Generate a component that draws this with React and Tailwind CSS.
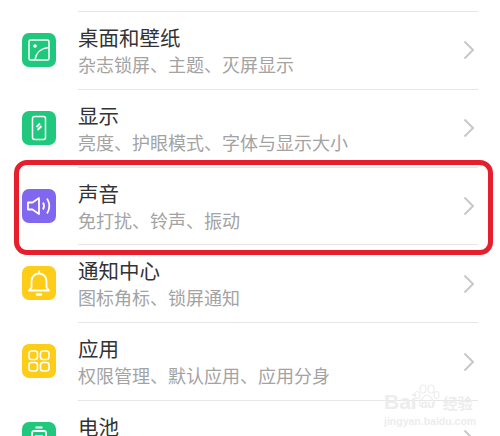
const font = { fontFamily: '"Noto Sans CJK SC", "Liberation Sans", sans-serif' };

const items = [
  { title: "桌面和壁纸", sub: "杂志锁屏、主题、灭屏显示", bg: "bg-[#1fc87c]", icon: <WallpaperIcon /> },
  { title: "显示", sub: "亮度、护眼模式、字体与显示大小", bg: "bg-[#1fc87c]", icon: <DisplayIcon /> },
  { title: "声音", sub: "免打扰、铃声、振动", bg: "bg-[#8166f0]", icon: <SoundIcon /> },
  { title: "通知中心", sub: "图标角标、锁屏通知", bg: "bg-[#fdcd17]", icon: <BellIcon /> },
  { title: "应用", sub: "权限管理、默认应用、应用分身", bg: "bg-[#fdcd17]", icon: <AppsIcon /> },
  { title: "电池", sub: "", bg: "bg-[#1fc87c]", icon: <BatteryIcon /> },
];

export default function App() {
  return (
    <div style={font} className="relative h-[436px] w-[500px] overflow-hidden bg-white pt-[11px]">
      {items.map((item) => (
        <Row key={item.title} {...item} />
      ))}

      {/* red highlight drawn on top of the screenshot */}
      <div className="absolute left-[14px] top-[160px] h-[95px] w-[479px] rounded-[13px] border-[5px] border-[#e61f2d]" />

      {/* watermark */}
      <Watermark />
    </div>
  );
}

function Row({ title, sub, bg, icon }) {
  return (
    <div className="flex h-[77.8px] pl-[22px] pr-[22px]">
      <div className={`mt-[22px] flex h-[34px] w-[34px] shrink-0 items-center justify-center rounded-[7px] ${bg}`}>
        {icon}
      </div>
      <div className="ml-[22px] flex flex-1 items-center border-t border-[#e6e6e6]">
        <div className="flex-1 self-start pt-[11px]">
          <div className="text-[20.5px] leading-[29px] text-[#333333]">{title}</div>
          <div className="text-[18px] leading-[24px] text-[#a3a3a3]">{sub}</div>
        </div>
        <svg width="12" height="20" viewBox="0 0 12 20" fill="none" stroke="#c8c8c8" strokeWidth="2" className="mr-[3px]">
          <path d="M1.5 1.5 10 10l-8.500 8.500" />
        </svg>
      </div>
    </div>
  );
}

function Watermark() {
  return (
    <div className="absolute left-[384px] top-[384px] w-[92px] font-['Liberation_Sans',sans-serif] text-[#ededed]">
      <svg width="26" height="26" viewBox="0 0 26 26" fill="none" stroke="#ededed" strokeWidth="1.200" className="absolute left-[30px] top-0">
        <ellipse cx="9" cy="5" rx="3" ry="4" />
        <ellipse cx="17" cy="5" rx="3" ry="4" />
        <ellipse cx="3.500" cy="11" rx="2.500" ry="3.500" />
        <ellipse cx="22.500" cy="11" rx="2.500" ry="3.500" />
        <path d="M13 11c-3 0-4 3-6 5-2 2-2 7 2 7 2 0 3-1 4-1s2 1 4 1c4 0 4-5 2-7-2-2-3-5-6-5z" />
      </svg>
      <div className="flex h-[30px] items-end text-[21px] font-bold leading-[24px]">
        <span>Bai</span>
        <span className="ml-[4px] w-[22px] text-[11px] leading-[20px]">du</span>
        <span className="font-['Noto_Sans_CJK_SC',sans-serif] text-[15px] leading-[22px]">经验</span>
      </div>
      <div className="mt-[1px] whitespace-nowrap text-[10.5px] font-bold leading-[12px]">jingyan.baidu.com</div>
    </div>
  );
}

function WallpaperIcon() {
  return (
    <svg width="22" height="22" viewBox="0 0 22 22" fill="none" stroke="white" strokeWidth="1.500">
      <rect x="1" y="1" width="20" height="20" rx="1.500" />
      <circle cx="7" cy="7" r="1.800" fill="white" stroke="none" />
      <path d="M7 21c1-7 6-12 14-12.500" />
    </svg>
  );
}

function DisplayIcon() {
  return (
    <svg width="16" height="26" viewBox="0 0 16 26" fill="none" stroke="white" strokeWidth="1.500">
      <rect x="1.500" y="1.500" width="13" height="23" rx="2" />
      <path d="M5.500 12 9 8.500M6.500 15 10.500 11" strokeWidth="1.800" />
    </svg>
  );
}

function SoundIcon() {
  return (
    <svg width="26" height="24" viewBox="0 0 26 24" fill="none" stroke="white" strokeWidth="1.800" strokeLinejoin="round">
      <path d="M2 8.500h4.500L13 4v16l-6.500-4.500H2z" />
      <path d="M17 8.500c1.300 2.200 1.300 4.800 0 7" />
      <path d="M21 4.500c2.800 4.500 2.800 10.500 0 15" />
    </svg>
  );
}

function BellIcon() {
  return (
    <svg width="24" height="28" viewBox="0 0 24 28" fill="none" stroke="white" strokeWidth="1.800" strokeLinejoin="round">
      <path d="M12 1.500v2.500M2 21.500h20l-2.500-3V12a7.500 7.500 0 0 0-15 0v6.500z" />
      <path d="M10 25.500h4" strokeWidth="2.400" strokeLinecap="round" />
    </svg>
  );
}

function AppsIcon() {
  return (
    <svg width="22" height="22" viewBox="0 0 22 22" fill="none" stroke="white" strokeWidth="1.600">
      <rect x="1" y="1" width="8.500" height="8.500" rx="2.500" />
      <rect x="12.500" y="1" width="8.500" height="8.500" rx="2.500" />
      <rect x="1" y="12.500" width="8.500" height="8.500" rx="2.500" />
      <rect x="12.500" y="12.500" width="8.500" height="8.500" rx="2.500" />
    </svg>
  );
}

function BatteryIcon() {
  return (
    <svg width="18" height="26" viewBox="0 0 18 26" fill="none" stroke="white" strokeWidth="1.800">
      <path d="M5.500 1.500h7" strokeWidth="2" />
      <rect x="2" y="5" width="14" height="19" rx="2" />
      <rect x="6" y="10" width="6" height="6" />
    </svg>
  );
}
